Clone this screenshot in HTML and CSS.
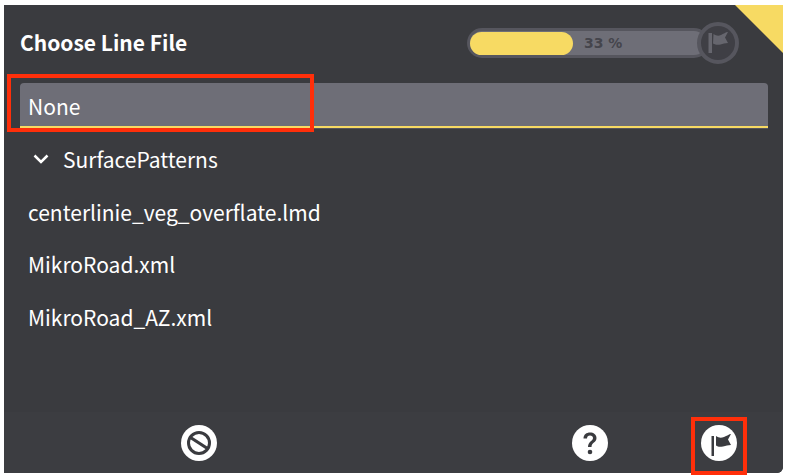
FILE: index.html
```html
<!DOCTYPE html>
<html lang="en">
<head>
<meta charset="utf-8">
<title>Choose Line File</title>
<link rel="stylesheet" href="styles.css">
</head>
<body>
<main class="panel">
  <div class="corner"></div>
  <header class="header">
    <h1 class="title">Choose Line File</h1>
    <div class="progress">
      <div class="track">
        <div class="fill"></div>
        <span class="percent">33 %</span>
      </div>
      <div class="badge">
        <svg class="flag" viewBox="0 0 34 34" width="34" height="34"><path d="M7.500 7h3.500v20H7.500z" fill="#66666e"/><path d="M12.500 8c3 2 5 2 7.500 1s4.500-3 7-3l-3 5.500 3 5.500c-3 0-5 1-7.500 1.500s-5 .5-7.500-1z" fill="#66666e"/></svg>
      </div>
    </div>
  </header>
  <ul class="list">
    <li class="row selected">None</li>
    <li class="row folder">
      <svg class="chevron" viewBox="0 0 16 10" width="16" height="10"><path d="M1.500 1.500 8 8l6.500-6.500" fill="none" stroke="#fff" stroke-width="2.500"/></svg>
      SurfacePatterns
    </li>
    <li class="row">centerlinie_veg_overflate.lmd</li>
    <li class="row">MikroRoad.xml</li>
    <li class="row">MikroRoad_AZ.xml</li>
  </ul>
  <footer class="footer">
    <button class="action cancel" aria-label="Cancel">
      <svg viewBox="0 0 36 36" width="36" height="36"><circle cx="18" cy="18" r="18" fill="#fff"/><circle cx="18" cy="18" r="10.500" fill="none" stroke="#3a3b3f" stroke-width="3"/><path d="M9.500 12.500 26.500 23.500" stroke="#3a3b3f" stroke-width="3.200"/></svg>
    </button>
    <button class="action help" aria-label="Help">
      <svg viewBox="0 0 36 36" width="36" height="36"><circle cx="18" cy="18" r="18" fill="#fff"/><path d="M11.500 13.500c0-4 3-6 6.500-6s6.500 2 6.500 5.500c0 4.500-5 4.500-5 9h-3.500c0-5.500 5-6 5-9 0-1.500-1.200-2.500-3-2.500s-3 1.200-3 3z" fill="#3a3b3f"/><circle cx="18" cy="27" r="2.300" fill="#3a3b3f"/></svg>
    </button>
    <button class="action finish" aria-label="Finish">
      <svg viewBox="0 0 36 36" width="36" height="36"><circle cx="18" cy="18" r="18" fill="#fff"/><path d="M10.500 11h2.500v20h-2.500z" fill="#3a3b3f"/><path d="M15 11c3 2 5 2 8 1s5-3 7-3l-3 5.500 3 5.500c-3 0-5 1-8 1.500s-5 .5-7-1z" fill="#3a3b3f"/></svg>
    </button>
  </footer>
</main>
<div class="mark mark-none"></div>
<div class="mark mark-flag"></div>
</body>
</html>
```
FILE: styles.css
```css
* { box-sizing: border-box; }
html, body { margin: 0; height: 100%; }
body {
  background: #fff;
  padding: 5px 4px 3px;
  position: relative;
  overflow: hidden;
  font-family: "Noto Sans CJK SC", "Noto Sans", sans-serif;
}
.panel {
  position: relative;
  height: 468px;
  background: #3a3b3f;
  border-radius: 0 0 6px 0;
  display: flex;
  flex-direction: column;
  color: #fff;
  overflow: hidden;
}
.corner {
  position: absolute;
  top: 0;
  right: 0;
  width: 48px;
  height: 48px;
  background: #f7da63;
  clip-path: polygon(0 0, 100% 0, 100% 100%);
}
.header {
  height: 78px;
  padding: 22px 44px 0 16px;
  display: flex;
  justify-content: space-between;
  align-items: flex-start;
}
.title {
  margin: -1px 0 0;
  font-size: 21px;
  font-weight: 700;
  line-height: 32px;
}
.progress {
  display: flex;
  align-items: center;
  margin-top: -5px;
}
.track {
  width: 242px;
  height: 30px;
  background: #6e6e77;
  border: 3px solid #56565e;
  border-radius: 15px;
  margin-right: -12px;
  display: flex;
  align-items: center;
  gap: 11px;
}
.fill {
  width: 103px;
  height: 23px;
  background: #f7da63;
  border-radius: 11.500px;
}
.percent {
  font-weight: 700;
  color: #45454c;
  font-family: "DejaVu Sans", sans-serif;
  font-size: 14px;
}
.badge {
  position: relative;
  width: 42px;
  height: 42px;
  border-radius: 50%;
  background: #3f3f45;
  border: 4px solid #56565e;
  flex: none;
  line-height: 0;
}
.list {
  list-style: none;
  margin: 0;
  padding: 0 15px 0 16px;
  flex: 1;
}
.row {
  height: 52.700px;
  padding-left: 8px;
  display: flex;
  align-items: center;
  font-size: 21px;
}
.row.selected {
  height: 45px;
  margin-bottom: 4.600px;
  background: #6e6e77;
  border-radius: 4px 4px 0 0;
  border-bottom: 2px solid #f7da63;
  box-shadow: 0 1px 0 #55555c;
  padding-top: 3px;
}
.row.folder { padding-left: 13px; gap: 14px; }
.footer {
  height: 61px;
  position: relative;
  background: #3c3d41;
}
.action {
  position: absolute;
  top: 13px;
  width: 36px;
  height: 36px;
  padding: 0;
  border: 0;
  background: none;
  line-height: 0;
}
.cancel { left: 177px; }
.help { left: 568px; }
.finish { left: 697px; }
.mark {
  position: absolute;
  border: 4px solid #ff2f0a;
}
.mark-none { left: 7px; top: 74px; width: 307px; height: 58px; }
.mark-flag { left: 691px; top: 417px; width: 56px; height: 58px; }
```
